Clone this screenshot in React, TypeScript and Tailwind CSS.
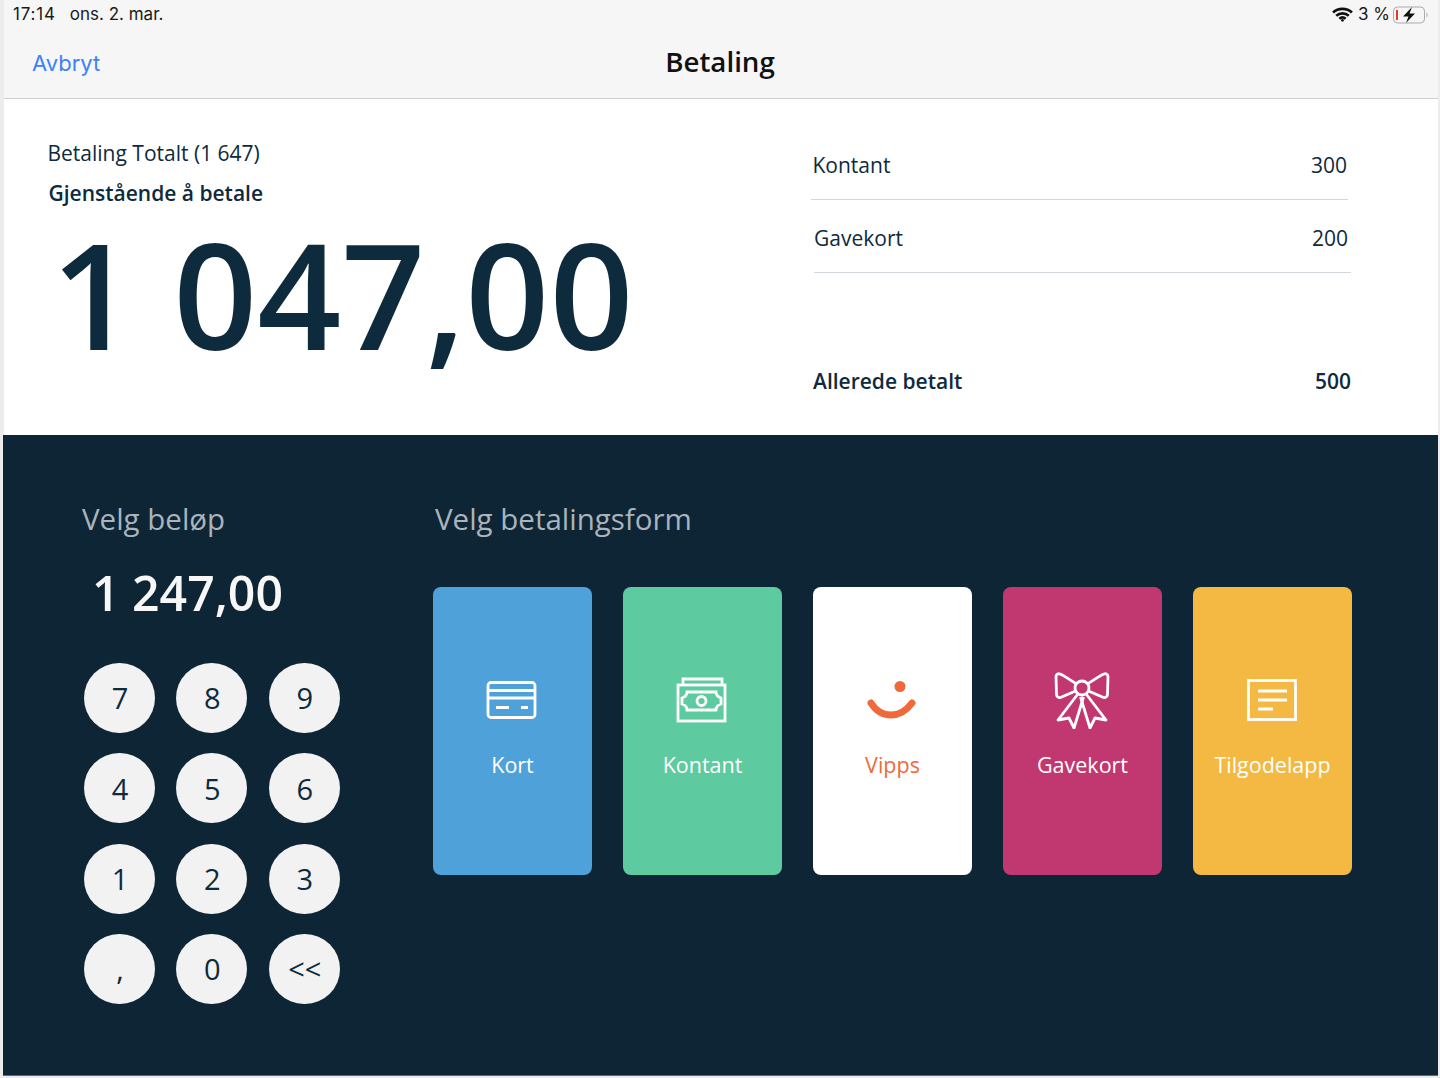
const keys = ["7", "8", "9", "4", "5", "6", "1", "2", "3", ",", "0", "<<"];

function CardIcon() {
  return (
    <svg width="52" height="40" viewBox="0 0 52 40" fill="none" stroke="currentColor" strokeWidth="2.8">
      <rect x="2" y="2.5" width="47" height="35" rx="3" />
      <path d="M2 10.5h47M2 18h47" />
      <path d="M10 27.5h13M35 27.5h7" strokeWidth="3" />
    </svg>
  );
}

function CashIcon() {
  return (
    <svg width="52" height="46" viewBox="0 0 52 46" fill="none" stroke="currentColor" strokeWidth="2.8">
      <path d="M7 8V2h39v6" />
      <rect x="2" y="8" width="47" height="36" />
      <path d="M11 15h29c0 3 2 5 5 6v6c-3 1-5 3-5 6H11c0-3-2-5-5-6v-6c3-1 5-3 5-6z" />
      <circle cx="25.5" cy="24" r="4.5" />
    </svg>
  );
}

function VippsIcon() {
  return (
    <svg width="50" height="40" viewBox="0 0 50 40" fill="none">
      <circle cx="33" cy="6.500" r="5.500" fill="#f0693a" />
      <path d="M4 23c5 8 12 12 20 12s15-4 21-12" stroke="#f0693a" strokeWidth="7" strokeLinecap="round" />
    </svg>
  );
}

function BowIcon() {
  return (
    <svg width="56" height="58" viewBox="0 0 56 58" fill="none" stroke="currentColor" strokeWidth="2.800" strokeLinejoin="round">
      <circle cx="28" cy="17" r="7" />
      <path d="M22 12.500C16 9 11 5 6 3c-2-.8-4 .5-4 2.500l.5 18c0 2 2 3.500 4 3l15-6.500" />
      <path d="M34 12.500C40 9 45 5 50 3c2-.8 4 .5 4 2.500l-.5 18c0 2-2 3.500-4 3l-15-6.500" />
      <path d="M23.500 23.500L4 49l11-2 5 10 9.500-31" />
      <path d="M32.500 23.500L52 49l-11-2-5 10-9.500-31" />
    </svg>
  );
}

function NoteIcon() {
  return (
    <svg width="50" height="42" viewBox="0 0 50 42" fill="none" stroke="currentColor" strokeWidth="2.800">
      <rect x="1.500" y="1.500" width="47" height="39" />
      <path d="M11 12h29M11 21h29M11 30h15" />
    </svg>
  );
}

const methods = [
  { label: "Kort", bg: "bg-[#4fa1da]", text: "text-white", icon: <CardIcon /> },
  { label: "Kontant", bg: "bg-[#5ecaa0]", text: "text-white", icon: <CashIcon /> },
  { label: "Vipps", bg: "bg-white", text: "text-[#f0693a]", icon: <VippsIcon /> },
  { label: "Gavekort", bg: "bg-[#c13871]", text: "text-white", icon: <BowIcon /> },
  { label: "Tilgodelapp", bg: "bg-[#f4b942]", text: "text-white", icon: <NoteIcon /> },
];

function StatusBar() {
  return (
    <div className="flex h-[29px] items-center justify-between pl-[9px] pr-[9px] font-['Inter',sans-serif] text-[17px] text-[#1a1a1a]">
      <div className="flex gap-[14px]">
        <span className="tracking-[0.8px]">17:14</span>
        <span>ons. 2. mar.</span>
      </div>
      <div className="flex items-center gap-[3px]">
        <svg width="21" height="15" viewBox="0 0 20 14" fill="none" stroke="#111" strokeWidth="2.600" className="mr-[2px]">
          <path d="M1 5c5-4.600 13-4.600 18 0M4 8.200c3.400-3 8.600-3 12 0M7 11c1.800-1.500 4.200-1.500 6 0" />
          <circle cx="10" cy="12.500" r="1.300" fill="#111" stroke="none" />
        </svg>
        <span>3 %</span>
        <svg width="36" height="18" viewBox="0 0 36 18" fill="none">
          <rect x="0.500" y="1" width="31" height="16" rx="4" stroke="#aaa" />
          <rect x="3" y="4" width="2" height="10" fill="#e5392f" />
          <path d="M19 1l-9 9.500h5.500L13 17l9-9.500h-5.500z" fill="#111" />
          <path d="M33.500 6.500c1.500.8 1.500 4.200 0 5z" fill="#aaa" />
        </svg>
      </div>
    </div>
  );
}

export default function App() {
  return (
    <div className="flex h-[1078px] w-[1440px] flex-col bg-[#ececec] pb-[2px] pl-[4px] pr-[2px] font-['Open_Sans',sans-serif]">
      <header className="h-[99px] border-b border-[#cfcfcf] bg-[#f6f6f6]">
        <StatusBar />
        <div className="flex h-[69px] items-center justify-between pl-[28px] pr-[36px]">
          <span className="w-[100px] font-['Inter',sans-serif] text-[22px] text-[#3a82f7]">Avbryt</span>
          <span className="mb-[4px] ml-[6px] text-[27.700px] font-semibold text-[#111]">Betaling</span>
          <span className="w-[100px]" />
        </div>
      </header>

      <section className="flex h-[336px] bg-white text-[#0e2a3d]">
        <div className="w-[807px] pl-[43.500px] pt-[39px]">
          <p className="text-[21px] leading-[30px]">Betaling Totalt (1 647)</p>
          <p className="ml-[1px] mt-[10px] text-[21px] font-semibold leading-[30px]">Gjenstående å betale</p>
          <p className="ml-[3.500px] whitespace-nowrap text-[147px] font-semibold leading-[170px]">1 047,00</p>
        </div>
        <div className="w-[541px] pt-[48px] text-[21px]">
          <div className="mr-[4px] flex h-[53px] items-start justify-between border-b border-[#d3d8dc] pl-[1.500px] pr-[1px] leading-[36px]">
            <span>Kontant</span>
            <span>300</span>
          </div>
          <div className="ml-[3px] mr-[1px] flex h-[73px] items-center justify-between border-b border-[#d3d8dc] pr-[3px] pt-[6px]">
            <span>Gavekort</span>
            <span>200</span>
          </div>
          <div className="ml-[2px] mr-[1px] mt-[90px] flex justify-between font-semibold leading-[36px]">
            <span>Allerede betalt</span>
            <span>500</span>
          </div>
        </div>
      </section>

      <section className="ml-[-1px] flex flex-1 border-b border-[#5a6b78] bg-[#0e2535]">
        <div className="w-[430px] pl-[79px] pt-[62px]">
          <h2 className="text-[29.500px] leading-[44px] text-[#a9b4bc]">Velg beløp</h2>
          <p className="ml-[10px] mt-[18px] text-[48.200px] font-semibold leading-[66px] text-[#f7f7f7]">1 247,00</p>
          <div className="ml-[2px] mt-[38px] grid grid-cols-[71px_71px_71px] gap-x-[21.400px] gap-y-[20.300px]">
            {keys.map((k) => (
              <button key={k} className="flex h-[70px] w-[71px] items-center justify-center rounded-full bg-[#f2f2f2] pl-[1px] text-[29px] text-[#0e2a3d]">
                {k}
              </button>
            ))}
          </div>
        </div>
        <div className="pt-[62px]">
          <h2 className="ml-[2px] text-[29.500px] leading-[44px] text-[#a9b4bc]">Velg betalingsform</h2>
          <div className="mt-[46px] flex gap-[31px]">
            {methods.map((m) => (
              <div key={m.label} className={`flex h-[288px] w-[159px] flex-col items-center rounded-[8px] ${m.bg} ${m.text}`}>
                <div className="mt-[83px] flex h-[60px] items-center justify-center pr-[2px]">{m.icon}</div>
                <span className="mt-[19px] text-[21.500px] font-medium leading-[32px]">{m.label}</span>
              </div>
            ))}
          </div>
        </div>
      </section>
    </div>
  );
}
